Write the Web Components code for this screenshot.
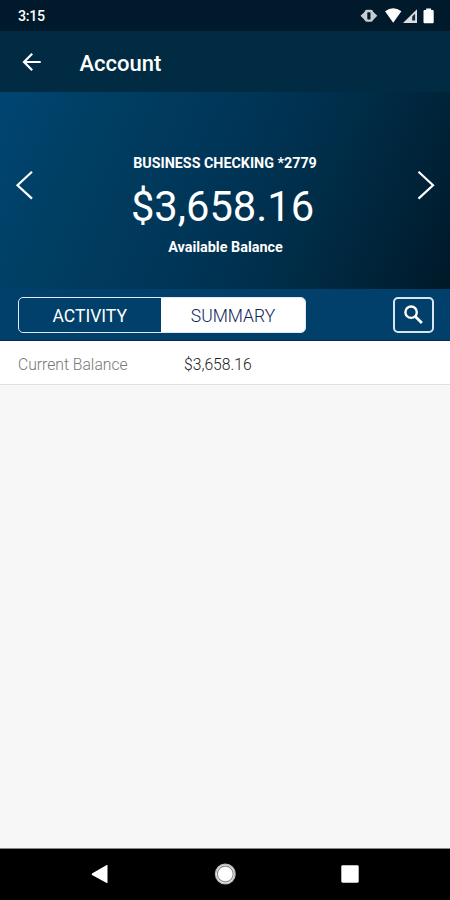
<!DOCTYPE html>
<html lang="en">
<head>
<meta charset="utf-8">
<meta name="viewport" content="width=device-width">
<title>Account</title>
<style>
html, body { margin: 0; height: 100%; }
body { font-family: Roboto, "Liberation Sans", sans-serif; background: #f7f7f7; overflow: hidden; }
</style>
</head>
<body>
<account-screen></account-screen>
<script>
const define = (name, html) => {
  const template = document.createElement('template');
  template.innerHTML = html;
  customElements.define(name, class extends HTMLElement {
    constructor() {
      super();
      this.attachShadow({ mode: 'open' }).append(template.content.cloneNode(true));
    }
  });
};

define('status-bar', `
<style>
:host { display: flex; justify-content: space-between; box-sizing: border-box; height: 31px; background: #00192b; color: #fff; padding-left: 18px; }
span { font-size: 14.2px; font-weight: 500; line-height: 33px; letter-spacing: -.3px; }
svg { display: block; }
</style>
<span>3:15</span>
<svg width="100" height="31" viewBox="350 0 100 31">
  <path d="M360.5 15.8l4.5-4.4v8.8zM377.3 15.8l-4.5-4.4v8.8z" fill="#c8ccd0"/>
  <rect x="364.6" y="9.8" width="8.6" height="12" rx="2.4" fill="#c8ccd0"/>
  <rect x="367.3" y="12.2" width="3.2" height="7.2" rx=".6" fill="#00192b"/>
  <path d="M385 11.3q8-6 16.4 0L393.2 22.8z" fill="#fff"/>
  <path d="M403 23L417 9.3V23z" fill="#dcdee0"/>
  <path d="M412.3 16.2l2.8-2.4V20.6H412z" fill="#182a38"/>
  <path d="M424.5 10h1.6V8.5h5V10h1.6q1 0 1 1v11.2q0 1-1 1h-8.2q-1 0-1-1V11q0-1 1-1z" fill="#fff"/>
</svg>`);

define('app-header', `
<style>
:host { display: flex; align-items: center; height: 61px; padding-left: 22px; background: #002b43; color: #fff; }
svg { flex: none; margin-right: 37.5px; }
span { font-size: 22px; font-weight: 500; line-height: 28px; padding-top: 4px; }
</style>
<svg width="20" height="20" viewBox="0 0 20 20" fill="none" stroke="#fff" stroke-width="2.2"><path d="M18.7 10H2M10.2 1.8L2 10l8.2 8.2"/></svg>
<span><slot></slot></span>`);

define('balance-card', `
<style>
:host { display: flex; justify-content: space-between; height: 197px; box-sizing: border-box; padding: 0 15px; color: #fff; background: linear-gradient(113deg, #004572 0%, #003e62 22%, #003557 48%, #002d48 68%, #002338 85%, #001828 100%); }
svg { margin-top: 78px; }
.details { display: flex; flex-direction: column; align-items: center; padding-top: 61px; }
.name { font-size: 14.3px; line-height: 20px; font-weight: 700; }
.amount { font-size: 41.7px; line-height: 50px; margin-top: 9px; margin-left: -5px; }
.label { font-size: 14.4px; line-height: 20px; font-weight: 700; margin-top: 6px; margin-left: 1px; }
</style>
<svg width="18" height="30" viewBox="0 0 18 30" fill="none" stroke="#fff" stroke-width="2.2"><path d="M17 1.8L2.5 15.2 17 28.6"/></svg>
<div class="details">
  <div class="name"><slot name="name"></slot></div>
  <div class="amount"><slot name="amount"></slot></div>
  <div class="label"><slot name="label"></slot></div>
</div>
<svg width="18" height="30" viewBox="0 0 18 30" fill="none" stroke="#fff" stroke-width="2.2"><path d="M1.5 1.8L16 15.2 1.5 28.6"/></svg>`);

define('view-switch', `
<style>
:host { display: flex; justify-content: space-between; box-sizing: border-box; height: 52px; padding: 8px 16.5px 8px 17.5px; background: #00406a; border-bottom: 1px solid #002c5c; }
.tabs { display: flex; box-sizing: border-box; width: 288.5px; height: 36px; border: 1.5px solid #e2e8f8; border-radius: 5px; overflow: hidden; }
.tab { flex: 1; text-align: center; font-size: 17.5px; line-height: 37px; color: #fff; }
.active { flex: 1.01; background: #fff; color: #0c2458; font-weight: 300; }
.search { display: flex; align-items: center; justify-content: center; box-sizing: border-box; width: 40.5px; height: 36px; border: 2px solid #dce4f2; border-radius: 5px; }
</style>
<div class="tabs"><div class="tab"><slot name="first"></slot></div><div class="tab active"><slot name="second"></slot></div></div>
<div class="search"><svg width="22" height="22" viewBox="0 0 22 22" fill="none" stroke="#fff"><circle cx="9.1" cy="8.2" r="5.7" stroke-width="2.4"/><path d="M13.3 12.4l6.6 6.6" stroke-width="2.8"/></svg></div>`);

define('summary-row', `
<style>
:host { display: flex; box-sizing: border-box; height: 44px; padding-left: 18px; background: #fff; border-bottom: 1px solid #e0e0e0; font-size: 15.7px; font-weight: 300; line-height: 47px; }
.label { width: 166px; color: #777; }
.value { color: #222; }
</style>
<div class="label"><slot name="label"></slot></div><div class="value"><slot name="value"></slot></div>`);

define('navigation-bar', `
<style>
:host { display: block; height: 52px; background: #000; border-top: 1px solid #888; box-sizing: border-box; }
svg { display: block; }
</style>
<svg width="450" height="51" viewBox="0 849 450 51" fill="#fff">
  <path d="M107.5 865.3v17.4q0 .6-.8.3L92 875q-.8-.7 0-1.4l14.7-8.6q.8-.3.8.3z"/>
  <circle cx="225.3" cy="874" r="9.8" fill="#fff" stroke="#bbb" stroke-width="1.4"/>
  <circle cx="225.3" cy="874" r="7.9" fill="none" stroke="#888" stroke-width="1.1"/>
  <rect x="341.3" y="865.3" width="17.4" height="17.4" rx="1.4"/>
</svg>`);

define('account-screen', `
<style>
:host { display: flex; flex-direction: column; width: 450px; height: 900px; background: #f7f7f7; }
navigation-bar { margin-top: auto; }
</style>
<status-bar></status-bar>
<app-header>Account</app-header>
<balance-card><span slot="name">BUSINESS CHECKING *2779</span><span slot="amount">$3,658.16</span><span slot="label">Available Balance</span></balance-card>
<view-switch><span slot="first">ACTIVITY</span><span slot="second">SUMMARY</span></view-switch>
<summary-row><span slot="label">Current Balance</span><span slot="value">$3,658.16</span></summary-row>
<navigation-bar></navigation-bar>`);
</script>
</body>
</html>
